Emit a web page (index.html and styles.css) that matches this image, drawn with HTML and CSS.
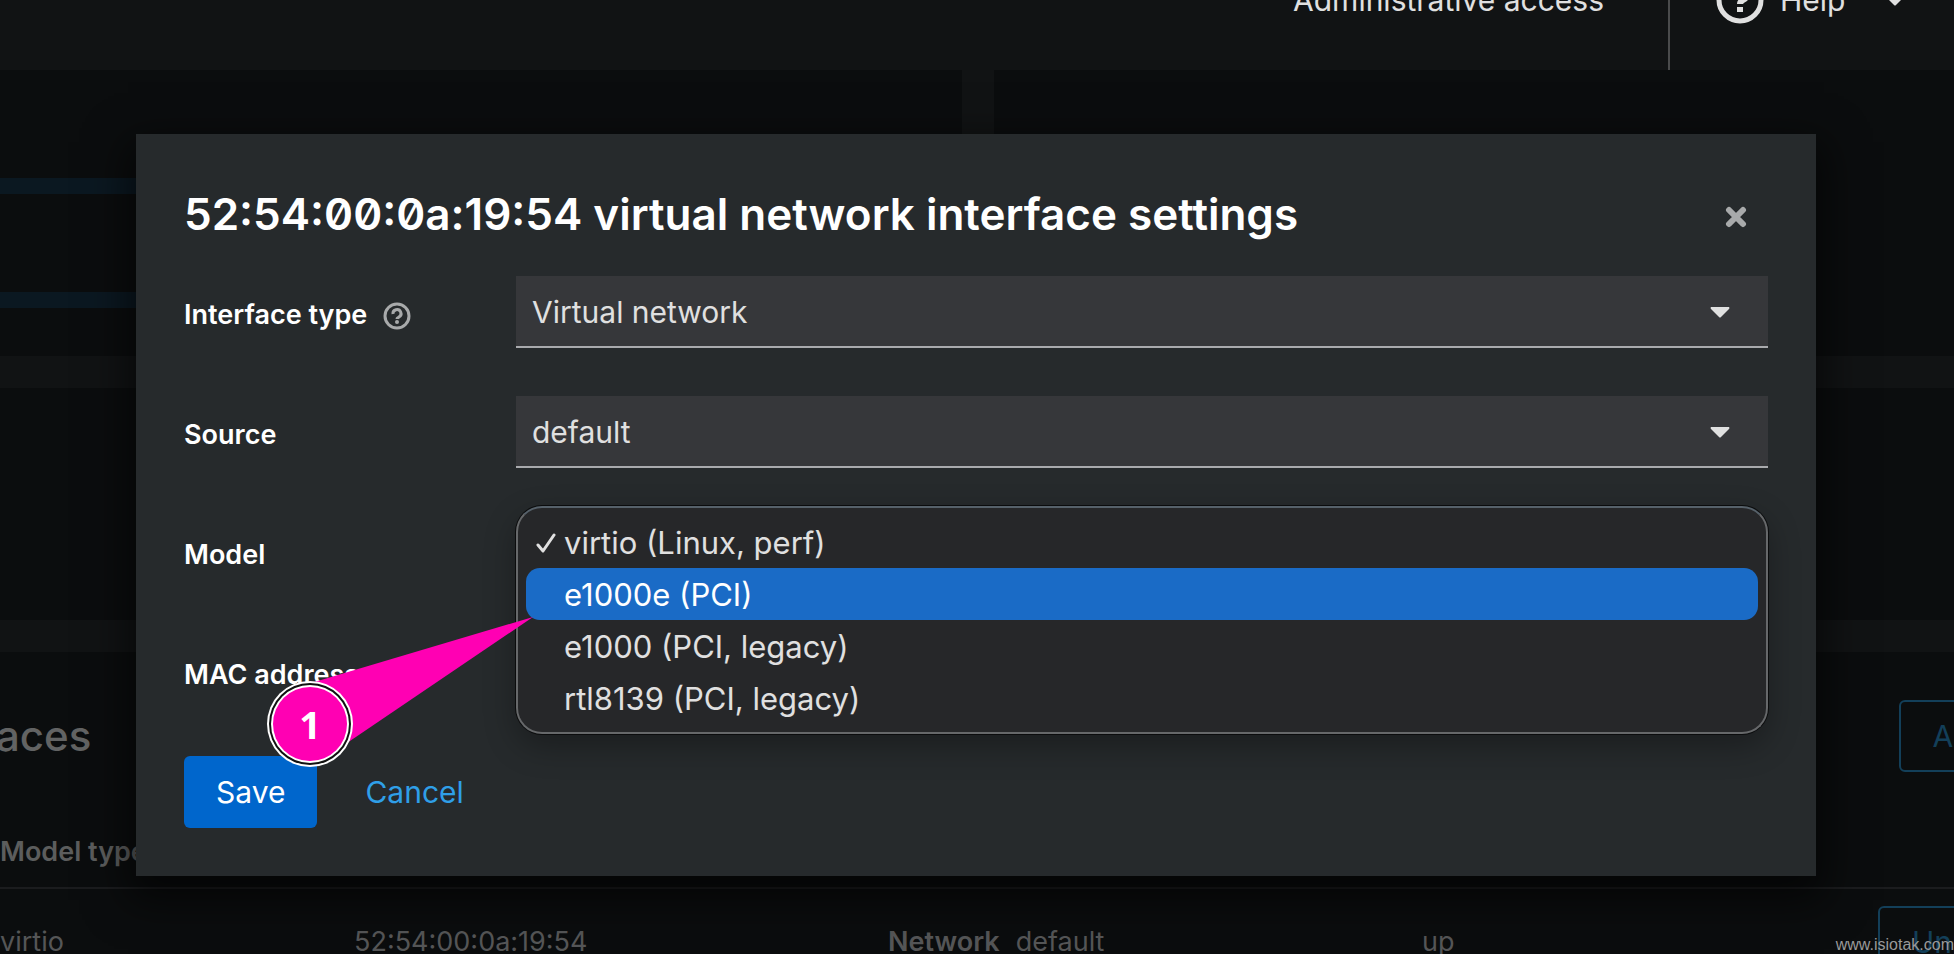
FILE: index.html
```html
<!DOCTYPE html>
<html lang="en">
<head>
<meta charset="UTF-8" />
<meta name="viewport" content="width=device-width, initial-scale=1" />
<title>Virtual network interface settings</title>
<link rel="stylesheet" href="styles.css">
</head>
<body>
<div class="page" aria-hidden="true">
  <header class="masthead">
    <span class="access">Administrative access</span>
    <div class="help">
      <svg class="help-icon" viewBox="0 0 48 48">
        <circle cx="24" cy="24" r="21" fill="none" stroke="currentColor" stroke-width="5" />
        <path d="M17 19a7 6 0 1 1 10 5c-2 1-3 2-3 4" fill="none" stroke="currentColor" stroke-width="6" />
        <rect x="21" y="31" width="6" height="5" fill="currentColor" />
      </svg>
      <span>Help</span>
      <svg class="caret help-caret" viewBox="0 0 20 11"><path d="M1 0h18q1 1 0 2l-8 8q-1 1-2 0l-8-8q-1-1 0-2z" fill="currentColor" /></svg>
    </div>
  </header>
  <div class="cards">
    <section class="card graph"><div class="graph-area"></div></section>
    <section class="card"></section>
    <section class="card middle"></section>
    <section class="card interfaces">
      <div class="card-header">
        <h2>aces</h2>
        <button class="btn-outline" type="button" tabindex="-1">Add</button>
      </div>
      <table>
        <thead>
          <tr><th class="col-model">Model type</th><th class="col-mac"></th><th class="col-source"></th><th class="col-state"></th><th></th></tr>
        </thead>
        <tbody>
          <tr>
            <td>virtio</td>
            <td>52:54:00:0a:19:54</td>
            <td><b>Network</b>default</td>
            <td>up</td>
            <td><button class="btn-outline" type="button" tabindex="-1">Unplug</button></td>
          </tr>
        </tbody>
      </table>
    </section>
  </div>
</div>

<div class="backdrop">
  <div class="modal" role="dialog" aria-modal="true" aria-labelledby="modal-title">
    <div class="modal-header">
      <h1 id="modal-title">52:54:00:0a:19:54 virtual network interface settings</h1>
      <button class="close" type="button" aria-label="Close">
        <svg viewBox="0 0 22 22"><path d="M4 4l14 14M18 4L4 18" stroke="currentColor" stroke-width="6" stroke-linecap="round" /></svg>
      </button>
    </div>
    <form>
      <div class="row">
        <div class="label">
          <label for="type">Interface type</label>
          <button class="hint" type="button" aria-label="More info">
            <svg viewBox="0 0 28 28">
              <circle cx="14" cy="14" r="12" fill="none" stroke="currentColor" stroke-width="3" />
              <path d="M10 12a4 4 0 1 1 6 3c-1 1-2 1-2 2" fill="none" stroke="currentColor" stroke-width="3" />
              <circle cx="14" cy="20" r="2" fill="currentColor" />
            </svg>
          </button>
        </div>
        <div class="field">
          <select id="type"><option>Virtual network</option></select>
          <svg class="caret" viewBox="0 0 20 11"><path d="M1 0h18q1 1 0 2l-8 8q-1 1-2 0l-8-8q-1-1 0-2z" fill="currentColor" /></svg>
        </div>
      </div>
      <div class="row">
        <div class="label"><label for="source">Source</label></div>
        <div class="field">
          <select id="source"><option>default</option></select>
          <svg class="caret" viewBox="0 0 20 11"><path d="M1 0h18q1 1 0 2l-8 8q-1 1-2 0l-8-8q-1-1 0-2z" fill="currentColor" /></svg>
        </div>
      </div>
      <div class="row">
        <div class="label"><label for="model">Model</label></div>
        <div class="field">
          <div class="popup">
            <select id="model" size="4">
              <option>virtio (Linux, perf)</option>
              <option selected>e1000e (PCI)</option>
              <option>e1000 (PCI, legacy)</option>
              <option>rtl8139 (PCI, legacy)</option>
            </select>
            <svg class="check" viewBox="0 0 20 20"><path d="M2 12l5 6L18 2" fill="none" stroke="currentColor" stroke-width="3" stroke-linecap="round" stroke-linejoin="round" /></svg>
          </div>
        </div>
      </div>
      <div class="row">
        <div class="label"><label for="mac">MAC address</label></div>
        <div class="field"><input id="mac" type="text" readonly></div>
      </div>
      <div class="footer">
        <button class="btn-primary" type="submit">Save</button>
        <button class="btn-link" type="button">Cancel</button>
      </div>
    </form>

    <!-- step marker pointing at the highlighted model -->
    <div class="marker">
      <svg viewBox="0 0 268 152">
        <path d="M266 2L44 68L80 128z" fill="#ff00b3" />
        <circle cx="43" cy="109" r="43" fill="#fff" />
        <circle cx="43" cy="109" r="41" fill="#111" />
        <circle cx="43" cy="109" r="39" fill="#fff" />
        <circle cx="43" cy="109" r="37" fill="#ff00b3" />
      </svg>
      <span>1</span>
    </div>
  </div>
</div>

<div class="watermark">www.isiotak.com</div>
</body>
</html>
```

FILE: styles.css
```css
* {
  margin: 0;
  padding: 0;
  box-sizing: border-box;
}

body {
  background: #111314;
  color: #e0e0e0;
  font-family: Inter, "Liberation Sans", sans-serif;
  font-size: 30px;
  height: 100vh;
  overflow: hidden;
}

button, select, input {
  font: inherit;
  color: inherit;
  background: none;
  border: 0;
  appearance: none;
}

svg {
  display: block;
}

/* Page behind the dialog */
.page {
  height: 100vh;
  overflow: hidden;
}

.masthead {
  display: flex;
  justify-content: flex-end;
  height: 140px;
  margin-top: -70px;
}

.access,
.help {
  display: flex;
  align-items: center;
}

.access {
  padding-right: 64px;
}

.help {
  gap: 16px;
  width: 286px;
  padding-left: 46px;
  border-left: 2px solid #4a4b4c;
}

.help-icon {
  width: 48px;
  height: 48px;
}

.help-caret {
  margin-left: 24px;
}

.caret {
  width: 20px;
  height: 11px;
}

.cards {
  display: grid;
  grid-template-columns: 962fr 960fr;
  gap: 32px;
}

.card {
  background: #0b0d0e;
}

.graph {
  height: 286px;
  padding-top: 108px;
}

.graph-area {
  height: 130px;
  border: solid #0b1821;
  border-width: 16px 0;
}

.middle,
.interfaces {
  grid-column: 1 / -1;
}

.middle {
  height: 232px;
}

.interfaces {
  height: 400px;
  padding-top: 48px;
  color: #555657;
  font-size: 27px;
}

.card-header {
  display: flex;
  justify-content: space-between;
  height: 116px;
  margin: 0 -70px 0 -4px;
}

h2 {
  font-size: 42px;
  font-weight: 500;
  line-height: 72px;
  color: #626363;
}

.btn-outline {
  height: 72px;
  padding: 0 32px;
  border: 2px solid #133f59;
  border-radius: 6px;
  color: #133f59;
  font-size: 30px;
}

table {
  width: 100%;
  table-layout: fixed;
  border-collapse: collapse;
  white-space: nowrap;
}

th {
  height: 72px;
  text-align: left;
  font-weight: 600;
  color: #5c5d5d;
  border-bottom: 2px solid #1b1c1e;
}

td {
  height: 106px;
}

.col-model { width: 354px; }
.col-mac { width: 534px; }
.col-source { width: 534px; }
.col-state { width: 456px; }

td b {
  margin-right: 16px;
  font-weight: 600;
}

/* Dialog */
.backdrop {
  position: absolute;
  inset: 0;
  padding: 134px 138px 0 136px;
}

.modal {
  position: relative;
  padding: 48px;
  background: #262a2c;
  box-shadow: 0 16px 40px 8px rgba(0, 0, 0, 0.6);
}

.modal-header {
  display: flex;
  justify-content: space-between;
  align-items: center;
  margin-bottom: 30px;
}

h1 {
  font-size: 44px;
  font-weight: 600;
  line-height: 64px;
  color: #fff;
  font-feature-settings: "zero";
}

.close {
  height: 64px;
  padding: 6px 21px 0;
  color: #a8aaab;
}

.close svg {
  width: 22px;
  height: 22px;
}

form {
  display: flex;
  flex-direction: column;
  gap: 48px;
}

.row {
  display: grid;
  grid-template-columns: 332px 1fr;
}

.label {
  display: flex;
  align-items: center;
  gap: 16px;
  padding-top: 4px;
  color: #fff;
  font-size: 27px;
  font-weight: 600;
}

.hint {
  padding-top: 4px;
  color: #a8aaab;
}

.hint svg {
  width: 28px;
  height: 28px;
}

.field {
  position: relative;
  height: 72px;
}

.field > select,
.field > input {
  width: 100%;
  height: 100%;
  padding: 2px 16px 0;
  background: #36373a;
  border-bottom: 2px solid #a9aaad;
}

.field > .caret {
  position: absolute;
  top: 31px;
  right: 38px;
  pointer-events: none;
}

.popup {
  position: absolute;
  z-index: 1;
  top: -10px;
  left: 0;
  right: 0;
  padding: 8px;
  background: #262729;
  border: 2px solid #66686a;
  border-top-color: #56616a;
  border-radius: 26px;
  box-shadow: 0 0 0 1px #0b0c0d, 0 12px 32px rgba(0, 0, 0, 0.3);
}

.popup select {
  display: block;
  width: 100%;
  height: 208px;
  overflow: hidden;
  outline: 0;
  font-size: 31px;
}

.popup option {
  height: 52px;
  padding: 8px 0 0 38px;
  border-radius: 14px;
  color: #e0e0e0;
}

.popup option:checked {
  background: linear-gradient(#1a6bc6, #1a6bc6);
  color: #fff;
}

.check {
  position: absolute;
  top: 25px;
  left: 18px;
  width: 20px;
  height: 20px;
}

.footer {
  display: flex;
  gap: 16px;
}

.footer button {
  height: 72px;
  padding: 0 32px;
  border-radius: 6px;
}

.btn-primary {
  background: #0066cc;
  color: #fff;
}

.btn-link {
  color: #2f9fe8;
}

.marker {
  position: absolute;
  z-index: 2;
  left: 131px;
  top: 481px;
  width: 268px;
  height: 152px;
  pointer-events: none;
}

.marker span {
  position: absolute;
  left: 0;
  top: 66px;
  width: 86px;
  line-height: 86px;
  text-align: center;
  color: #fff;
  font-family: "Open Sans", sans-serif;
  font-size: 38px;
  font-weight: 700;
}

.watermark {
  position: absolute;
  right: 0;
  bottom: 0;
  font: 16px/18px "Liberation Sans", Arial, sans-serif;
  color: #999;
}
```
